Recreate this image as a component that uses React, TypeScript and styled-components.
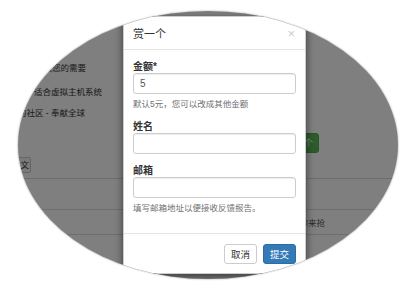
import React from 'react';
import styled, { createGlobalStyle } from 'styled-components';

const GlobalStyle = createGlobalStyle`
  html, body {
    margin: 0;
    padding: 0;
    background: #fff;
  }

  body {
    font-family: "Liberation Sans", "Noto Sans CJK SC", sans-serif;
    color: #333;
  }
`;

const App: React.FC = () => {
  return (
    <>
      <GlobalStyle />
      <Stage>
        <Lens>
          <BgPage>
            <TopSection>
              <IntroColumn>
                <IntroLine $gap={0}>可以按照您的需要</IntroLine>
                <IntroLine $gap={12}>量 - 适合虚拟主机系统</IntroLine>
                <IntroLine $gap={9}>的社区 - 奉献全球</IntroLine>
                <LangSlot>
                  <LangButton>文</LangButton>
                </LangSlot>
              </IntroColumn>
              <ActionColumn>
                <RewardButton>赏一个</RewardButton>
              </ActionColumn>
            </TopSection>
            <Table>
              <Row $height={31} />
              <Row $height={25}>
                <RowNote>等你来抢</RowNote>
              </Row>
              <Row $height={60} />
            </Table>
          </BgPage>

          <Backdrop />

          <Modal>
            <ModalHeader>
              <ModalTitle>赏一个</ModalTitle>
              <CloseButton>×</CloseButton>
            </ModalHeader>
            <ModalBody>
              <FormGroup>
                <Label>金额*</Label>
                <Input defaultValue="5" />
                <HelpText>默认5元，您可以改成其他金额</HelpText>
              </FormGroup>
              <FormGroup>
                <Label>姓名</Label>
                <Input />
              </FormGroup>
              <FormGroup $last>
                <Label>邮箱</Label>
                <Input />
                <HelpText>填写邮箱地址以便接收反馈报告。</HelpText>
              </FormGroup>
            </ModalBody>
            <ModalFooter>
              <Button>取消</Button>
              <Button $primary>提交</Button>
            </ModalFooter>
          </Modal>
        </Lens>
      </Stage>
    </>
  );
};

export default App;

const Stage = styled.div`
  width: 400px;
  height: 290px;
  box-sizing: border-box;
  padding: 11px 0 0 18px;
`;

const Lens = styled.div`
  position: relative;
  width: 380px;
  height: 268px;
  border-radius: 50%;
  overflow: hidden;
  background: #fff;
  box-shadow: 0 0 2px rgba(0, 0, 0, 0.45);
`;

/* page behind the dialog */
const BgPage = styled.div`
  padding-top: 51px;
  font-size: 8.5px;
  color: #333;
`;

const TopSection = styled.div`
  display: grid;
  grid-template-columns: 110px 1fr;
`;

const IntroColumn = styled.div`
  display: flex;
  flex-direction: column;
`;

const IntroLine = styled.div<{ $gap: number }>`
  margin-top: ${(p) => p.$gap}px;
  line-height: 12px;
  white-space: nowrap;
`;

const LangSlot = styled.div`
  width: 13px;
  margin-top: 38px;
  display: flex;
  justify-content: flex-end;
`;

const LangButton = styled.div`
  flex-shrink: 0;
  height: 16px;
  box-sizing: border-box;
  padding: 0 1px;
  line-height: 14px;
  border: 1px solid #ccc;
  border-radius: 2px;
  background: #f4f4f4;
  white-space: nowrap;
`;

const ActionColumn = styled.div`
  display: flex;
  justify-content: flex-end;
  align-items: flex-start;
  padding: 71px 79px 0 0;
`;

const RewardButton = styled.div`
  height: 20px;
  box-sizing: border-box;
  padding: 0 5px;
  line-height: 18px;
  font-size: 9px;
  color: #fff;
  background: #5cb85c;
  border: 1px solid #4cae4c;
  border-radius: 3px;
`;

const Table = styled.div`
  margin-top: 5px;
`;

const Row = styled.div<{ $height: number }>`
  height: ${(p) => p.$height}px;
  box-sizing: border-box;
  border-top: 1px solid #ddd;
  display: flex;
  align-items: center;
  justify-content: flex-end;
  padding-right: 73px;
`;

const RowNote = styled.span`
  color: #555;
`;

const Backdrop = styled.div`
  position: absolute;
  inset: 0;
  background: rgba(0, 0, 0, 0.5);
`;

/* dialog */
const Modal = styled.div`
  position: absolute;
  left: 105px;
  top: 5px;
  width: 183px;
  box-sizing: border-box;
  background: #fff;
  border: 1px solid rgba(0, 0, 0, 0.2);
  border-radius: 5px;
  box-shadow: 0 3px 9px rgba(0, 0, 0, 0.55);
  display: flex;
  flex-direction: column;
`;

const ModalHeader = styled.div`
  height: 33px;
  box-sizing: border-box;
  padding: 0 10px 0 9px;
  border-bottom: 1px solid #e5e5e5;
  display: flex;
  align-items: center;
  justify-content: space-between;
`;

const ModalTitle = styled.div`
  font-size: 11px;
  color: #333;
`;

const CloseButton = styled.span`
  font-size: 13px;
  line-height: 1;
  color: #000;
  opacity: 0.22;
`;

const ModalBody = styled.div`
  padding: 11px 9px 19px;
`;

const FormGroup = styled.div<{ $last?: boolean }>`
  display: flex;
  flex-direction: column;
  margin-bottom: ${(p) => (p.$last ? 0 : 11)}px;
`;

const Label = styled.label`
  font-size: 10px;
  line-height: 12px;
  font-weight: 700;
  color: #333;
`;

const Input = styled.input`
  width: 100%;
  height: 21px;
  box-sizing: border-box;
  margin: 0;
  padding: 0 6px;
  border: 1px solid #ccc;
  border-radius: 3px;
  font-family: inherit;
  font-size: 10px;
  color: #555;
  box-shadow: inset 0 1px 1px rgba(0, 0, 0, 0.075);
  outline: none;
`;

const HelpText = styled.div`
  margin-top: 4px;
  font-size: 8.5px;
  line-height: 12px;
  color: #6f6f6f;
  white-space: nowrap;
`;

const ModalFooter = styled.div`
  border-top: 1px solid #e5e5e5;
  padding: 10px 9px 9px;
  display: flex;
  justify-content: flex-end;
  gap: 6px;
`;

const Button = styled.button<{ $primary?: boolean }>`
  height: 20px;
  box-sizing: border-box;
  margin: 0;
  padding: 0 6px;
  font-family: inherit;
  font-size: 9.5px;
  border-radius: 3px;
  border: 1px solid ${(p) => (p.$primary ? '#2e6da4' : '#ccc')};
  background: ${(p) => (p.$primary ? '#337ab7' : '#fff')};
  color: ${(p) => (p.$primary ? '#fff' : '#333')};
`;
